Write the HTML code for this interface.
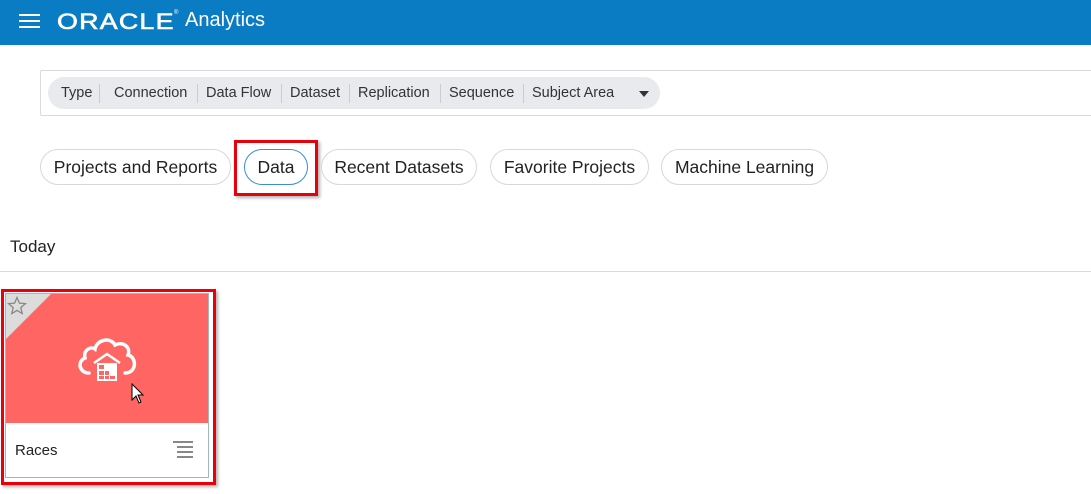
<!DOCTYPE html><html><head><style>
*{box-sizing:border-box;margin:0;padding:0}
body{width:1091px;height:494px;background:#fff;font-family:"Liberation Sans",Arial,sans-serif;position:relative;overflow:hidden;color:#222}
.hdr{position:absolute;left:0;top:0;width:1091px;height:45px;background:#0a7cc3}
.abs{position:absolute}
.chip{position:absolute;top:149px;height:36px;border:1px solid #d5d8dc;border-radius:18px;font-size:17.5px;line-height:34px;text-align:center;color:#222;background:#fff}
.f{position:absolute;top:85px;font-size:14.5px;color:#333}
.sep{position:absolute;top:84px;width:1px;height:19px;background:#c9ccd0}
</style></head><body>
<div class="hdr">
 <div class="abs" style="left:19px;top:14px;width:21px;height:2px;background:#fff"></div>
 <div class="abs" style="left:19px;top:20px;width:21px;height:2px;background:#fff"></div>
 <div class="abs" style="left:19px;top:26px;width:21px;height:2px;background:#fff"></div>
 <div class="abs" style="left:57px;top:9px;color:#fff;font-size:22px;letter-spacing:1px;transform:scaleX(1.22);transform-origin:left;-webkit-text-stroke:0.6px #fff">ORACLE</div>
 <div class="abs" style="left:174px;top:10px;color:#fff;font-size:6px">®</div>
 <div class="abs" style="left:185px;top:9px;color:#fff;font-size:20px">Analytics</div>
</div>
<div class="abs" style="left:40px;top:70px;width:1060px;height:46px;border:1px solid #d8dadd;border-radius:2px"></div>
<div class="abs" style="left:48px;top:77px;width:612px;height:32px;background:#e8eaed;border-radius:16px"></div>
<div class="f" style="left:61px">Type</div><div class="sep" style="left:99px"></div>
<div class="f" style="left:114px">Connection</div><div class="sep" style="left:197px"></div>
<div class="f" style="left:206px">Data Flow</div><div class="sep" style="left:281px"></div>
<div class="f" style="left:290px">Dataset</div><div class="sep" style="left:349px"></div>
<div class="f" style="left:358px">Replication</div><div class="sep" style="left:440px"></div>
<div class="f" style="left:449px">Sequence</div><div class="sep" style="left:523px"></div>
<div class="f" style="left:532px">Subject Area</div>
<div class="abs" style="left:639px;top:91px;border-left:5px solid transparent;border-right:5px solid transparent;border-top:6px solid #333"></div>
<div class="chip" style="left:40px;width:191px">Projects and Reports</div>
<div class="chip" style="left:244px;width:64px;border-color:#3a8fd0">Data</div>
<div class="abs" style="left:234px;top:140px;width:84px;height:56px;border:3px solid #e8000b;box-shadow:2px 2px 3px rgba(0,0,0,.3)"></div>
<div class="chip" style="left:321px;width:156px">Recent Datasets</div>
<div class="chip" style="left:490px;width:159px">Favorite Projects</div>
<div class="chip" style="left:661px;width:167px">Machine Learning</div>
<div class="abs" style="left:10px;top:237px;font-size:17px;color:#222">Today</div>
<div class="abs" style="left:0;top:271px;width:1091px;height:1px;background:#d8dadd"></div>
<div class="abs" style="left:1px;top:289px;width:215px;height:196px;border:3px solid #e8000b;box-shadow:2px 2px 3px rgba(0,0,0,.3)"></div>
<div class="abs" style="left:5px;top:293px;width:204px;height:185px;border:1px solid #9fb6c8;background:#fff"></div>
<div class="abs" style="left:6px;top:294px;width:202px;height:129px;background:#ff6663"></div>
<div class="abs" style="left:6px;top:294px;width:0;height:0;border-top:45px solid #dcdcdc;border-right:45px solid transparent"></div>
<svg class="abs" style="left:7px;top:296px" width="20" height="20" viewBox="0 0 20 20"><path d="M10 1.5l2.4 5.6 6 .5-4.6 4 1.4 5.9L10 14.4 4.8 17.5l1.4-5.9-4.6-4 6-.5z" fill="none" stroke="#888" stroke-width="1.3"/></svg>
<svg class="abs" style="left:75px;top:333px" width="64" height="50" viewBox="0 0 64 50">
<path d="M14 40 C4 40 2 28 10 25 C8 17 16 13 20 16 C22 6 36 4 40 12 C48 8 56 14 53 22 C62 24 62 40 50 40" fill="none" stroke="#fff" stroke-width="3.5" stroke-linecap="round"/>
<path d="M19 30 L32 21 L45 30" fill="none" stroke="#fff" stroke-width="2.5"/>
<rect x="22" y="30" width="20" height="18" fill="#fff"/>
<g fill="#ff6663"><rect x="24" y="32" width="5" height="4"/><rect x="24" y="38" width="5" height="4"/><rect x="30" y="38" width="4" height="4"/><rect x="24" y="43" width="5" height="3"/><rect x="30" y="43" width="4" height="3"/><rect x="35" y="43" width="5" height="3"/></g></svg>
<svg class="abs" style="left:131px;top:383px" width="14" height="22" viewBox="0 0 14 22"><path d="M1 1 L1 17 L5 13 L8 20 L10 19 L7 12 L12 12 Z" fill="#fff" stroke="#000" stroke-width="1"/></svg>
<div class="abs" style="left:15px;top:442px;font-size:15px;color:#222">Races</div>
<div class="abs" style="left:173px;top:441px;width:20px;height:2px;background:#888"></div>
<div class="abs" style="left:177px;top:446px;width:16px;height:2px;background:#888"></div>
<div class="abs" style="left:177px;top:451px;width:16px;height:2px;background:#888"></div>
<div class="abs" style="left:177px;top:456px;width:16px;height:2px;background:#888"></div>
</body></html>
